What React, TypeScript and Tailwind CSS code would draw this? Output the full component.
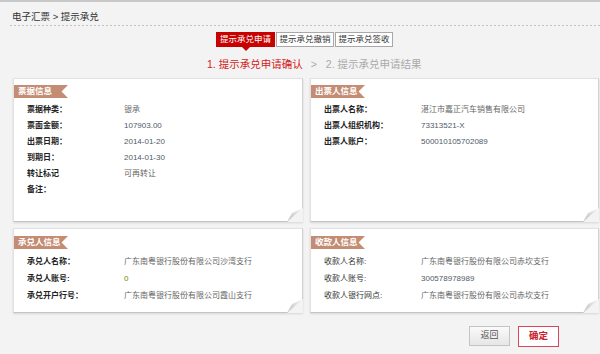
import React from "react";

type Row = { label: string; value: string; valueClass?: string };

function Curl() {
  return (
    <svg className="absolute right-[-1px] bottom-[-1px]" width="16" height="14" viewBox="0 0 16 14">
      <defs>
        <linearGradient id="fold" x1="0" y1="1" x2="1" y2="0">
          <stop offset="0" stopColor="#bdbdbd" />
          <stop offset="0.55" stopColor="#dcdcdc" />
          <stop offset="1" stopColor="#f4f4f4" />
        </linearGradient>
      </defs>
      <polygon points="16,0 16,14 0,14" fill="#f3f3f3" />
      <polygon points="0,14 16,0 5,5" fill="url(#fold)" />
    </svg>
  );
}

function Card({
  title,
  rows,
  heightClass,
  rowClass,
  bold = true,
  ribbonTop,
}: {
  title: string;
  rows: Row[];
  heightClass: string;
  rowClass: string;
  bold?: boolean;
  ribbonTop: string;
}) {
  return (
    <div
      className={`relative bg-white border border-[#e2e2e2] border-b-[#c4c4c4] border-r-[#d0d0d0] shadow-[0_1px_2px_rgba(0,0,0,0.12)] ${heightClass}`}
    >
      <div className={`${ribbonTop} flex`}>
        <div className="h-[13px] w-[54px] bg-[#c48c73] [clip-path:polygon(0_0,100%_0,88%_50%,100%_100%,0_100%)] pl-[4px] text-[8.5px] leading-[13px] font-bold text-white">
          {title}
        </div>
      </div>
      <div className="pl-[13px] pt-[4px]">
        {rows.map((r) => (
          <div key={r.label} className={`flex ${rowClass}`}>
            <div className={`w-[97px] text-[8px] ${bold ? "font-bold text-[#222]" : "text-[#333]"}`}>{r.label}</div>
            <div className={`text-[8px] ${r.valueClass ?? "text-[#666]"}`}>{r.value}</div>
          </div>
        ))}
      </div>
      <Curl />
    </div>
  );
}

export default function App() {
  return (
    <div className="w-[600px] h-[354px] bg-[#f3f3f3] border-t-2 border-[#c8c8c8] font-['Liberation_Sans','Noto_Sans_CJK_SC',sans-serif] overflow-hidden">
      <div className="h-[23px] pl-[12px] pt-[9px] text-[9.5px] leading-[12px] text-[#333]">电子汇票 &gt; 提示承兑</div>
      <div className="ml-[10px] h-px bg-[repeating-linear-gradient(90deg,#c4c4c4_0_2px,transparent_2px_4px)]" />

      <div className="mt-[6px] flex pl-[216px] gap-px">
        <div className="relative h-[15px] w-[59px] bg-[#c70000] text-white text-[8.5px] leading-[15px] text-center">
          提示承兑申请
          <div className="absolute left-[26px] top-[15px] w-0 h-0 border-l-[4px] border-r-[4px] border-t-[4px] border-l-transparent border-r-transparent border-t-[#c70000]" />
        </div>
        <div className="h-[15px] w-[58px] bg-white border border-[#a8a8a8] text-[#333] text-[8.5px] leading-[13px] text-center">
          提示承兑撤销
        </div>
        <div className="h-[15px] w-[58px] bg-white border border-[#a8a8a8] text-[#333] text-[8.5px] leading-[13px] text-center">
          提示承兑签收
        </div>
      </div>

      <div className="mt-[10px] flex pl-[207px] text-[10.5px] leading-[14px]">
        <span className="text-[#d42020]">1. 提示承兑申请确认</span>
        <span className="ml-[8px] text-[#aaa]">&gt;</span>
        <span className="ml-[9px] text-[#aaa]">2. 提示承兑申请结果</span>
      </div>

      <div className="mt-[7px] pl-[13px] grid grid-cols-[290px_289px] gap-x-[7px] gap-y-[6px]">
        <Card
          title="票据信息"
          heightClass="h-[144px]"
          rowClass="leading-[16px]"
          ribbonTop="mt-[6px]"
          rows={[
            { label: "票据种类：", value: "银承" },
            { label: "票面金额：", value: "107903.00", valueClass: "text-[#505a68]" },
            { label: "出票日期：", value: "2014-01-20", valueClass: "text-[#505a68]" },
            { label: "到期日：", value: "2014-01-30", valueClass: "text-[#505a68]" },
            { label: "转让标记", value: "可再转让" },
            { label: "备注：", value: "" },
          ]}
        />
        <Card
          title="出票人信息"
          heightClass="h-[144px]"
          rowClass="leading-[16px]"
          ribbonTop="mt-[6px]"
          rows={[
            { label: "出票人名称：", value: "湛江市嘉正汽车销售有限公司" },
            { label: "出票人组织机构：", value: "73313521-X", valueClass: "text-[#505a68]" },
            { label: "出票人账户：", value: "500010105702089", valueClass: "text-[#505a68]" },
          ]}
        />
        <Card
          title="承兑人信息"
          heightClass="h-[85px]"
          rowClass="leading-[17px]"
          ribbonTop="mt-[7px]"
          rows={[
            { label: "承兑人名称：", value: "广东南粤银行股份有限公司沙湾支行" },
            { label: "承兑人账号:", value: "0", valueClass: "text-[#5f8a1c]" },
            { label: "承兑开户行号：", value: "广东南粤银行股份有限公司霞山支行" },
          ]}
        />
        <Card
          title="收款人信息"
          heightClass="h-[85px]"
          rowClass="leading-[17px]"
          ribbonTop="mt-[7px]"
          bold={false}
          rows={[
            { label: "收款人名称:", value: "广东南粤银行股份有限公司赤坎支行" },
            { label: "收款人账号:", value: "300578978989", valueClass: "text-[#505a68]" },
            { label: "收款人银行网点:", value: "广东南粤银行股份有限公司赤坎支行" },
          ]}
        />
      </div>

      <div className="mt-[13px] flex justify-end pr-[41px] gap-[8px]">
        <button className="h-[20px] w-[41px] border border-[#c4c4c4] bg-[linear-gradient(#fafafa,#e6e6e6)] text-[9px] text-[#555]">
          返回
        </button>
        <button className="h-[21px] w-[41px] border border-[#d24a5a] bg-white text-[9.5px] font-bold text-[#c8202e]">
          确定
        </button>
      </div>
    </div>
  );
}
